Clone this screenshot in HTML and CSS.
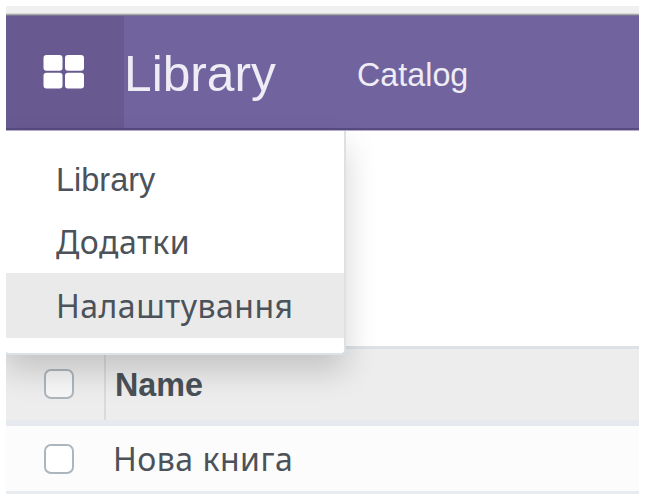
FILE: index.html
```html
<!DOCTYPE html>
<html lang="uk">
<head>
<meta charset="utf-8">
<title>Library</title>
<link rel="stylesheet" href="styles.css">
</head>
<body>
<div class="app">
  <div class="chrome"></div>
  <header class="navbar">
    <button class="apps" aria-label="Menu">
      <svg width="42" height="34" viewBox="0 0 42 34" fill="#fff"><rect x="0.5" y="0" width="19" height="15.8" rx="3"/><rect x="22" y="0" width="19" height="15.8" rx="3"/><rect x="0.5" y="17.8" width="19" height="15.8" rx="3"/><rect x="22" y="17.8" width="19" height="15.8" rx="3"/></svg>
    </button>
    <span class="brand">Library</span>
    <span class="section">Catalog</span>
    <nav class="menu">
      <a class="item latin">Library</a>
      <a class="item">Додатки</a>
      <a class="item active">Налаштування</a>
    </nav>
  </header>
  <div class="panel"></div>
  <div class="row head">
    <span class="check"><i class="box"></i></span>
    <span class="cell title">Name</span>
  </div>
  <div class="row record">
    <span class="check"><i class="box"></i></span>
    <span class="cell">Нова книга</span>
  </div>
</div>
</body>
</html>
```
FILE: styles.css
```css
* { box-sizing: border-box; }
body {
  margin: 0;
  padding: 6px 11px 0 6px;
  background: #fff;
  color: #4c5259;
  font-family: "Noto Sans", sans-serif;
  font-size: 32px;
  letter-spacing: .5px;
}
.app { width: 633px; height: 488px; overflow: hidden; }
.chrome {
  height: 10px;
  background: linear-gradient(#f0f0f0 0 7px, #d9d9d7 7px 8px, #aaa9ac 8px 9px, #7e7596 9px);
}
.navbar {
  position: relative;
  display: flex;
  height: 114px;
  background: #71639e;
  border-bottom: 2px solid #584b80;
  box-shadow: 0 1px #b7b0ca;
  font-family: "Liberation Sans", sans-serif;
  letter-spacing: 0;
  color: #eeecf5;
}
.apps {
  width: 118px;
  padding: 0 0 0 37px;
  border: 0;
  background: #685a91;
  text-align: left;
}
.apps svg { display: block; }
.brand { width: 233px; font-size: 49.7px; line-height: 116px; }
.section { font-size: 32.3px; line-height: 118px; }
.menu {
  position: absolute;
  z-index: 1;
  top: 115px;
  left: -2px;
  width: 342px;
  height: 224px;
  padding: 18px 0 0;
  background: #fff;
  border: 2px solid #dce1e6;
  border-top: 0;
  border-radius: 0 0 5px 5px;
  box-shadow: 0 16px 32px rgba(0, 0, 0, .175);
  color: #4c5259;
  font-family: "Noto Sans", sans-serif;
  letter-spacing: .5px;
}
.item { display: block; height: 62px; padding-left: 50px; line-height: 62px; }
.latin { font: 32.5px/62px "Liberation Sans", sans-serif; letter-spacing: 0; }
.active { height: 65px; margin-top: .4px; line-height: 66px; background: #eaeaea; }
.panel { height: 216px; }
.row { display: flex; align-items: center; }
.head {
  height: 80px;
  background: #ededed;
  border-top: 3px solid #dde2e6;
  border-bottom: 6px solid #e6eaee;
}
.record { height: 68px; background: #fcfcfc; border-bottom: 3px solid #e9ecef; }
.check { display: flex; align-items: center; width: 100px; height: 65px; padding-left: 38px; }
.head .check { height: 71px; padding-bottom: 2px; border-right: 2px solid #dadada; }
.box { width: 30px; height: 30px; border: 2px solid #adb5bd; border-radius: 7px; background: #fff; }
.head .box { background: #f7f7f7; }
.cell { padding-left: 7px; line-height: 64px; }
.title { padding-left: 9px; font: bold 32.3px/72px "Liberation Sans", sans-serif; letter-spacing: 0; color: #495057; }
```
